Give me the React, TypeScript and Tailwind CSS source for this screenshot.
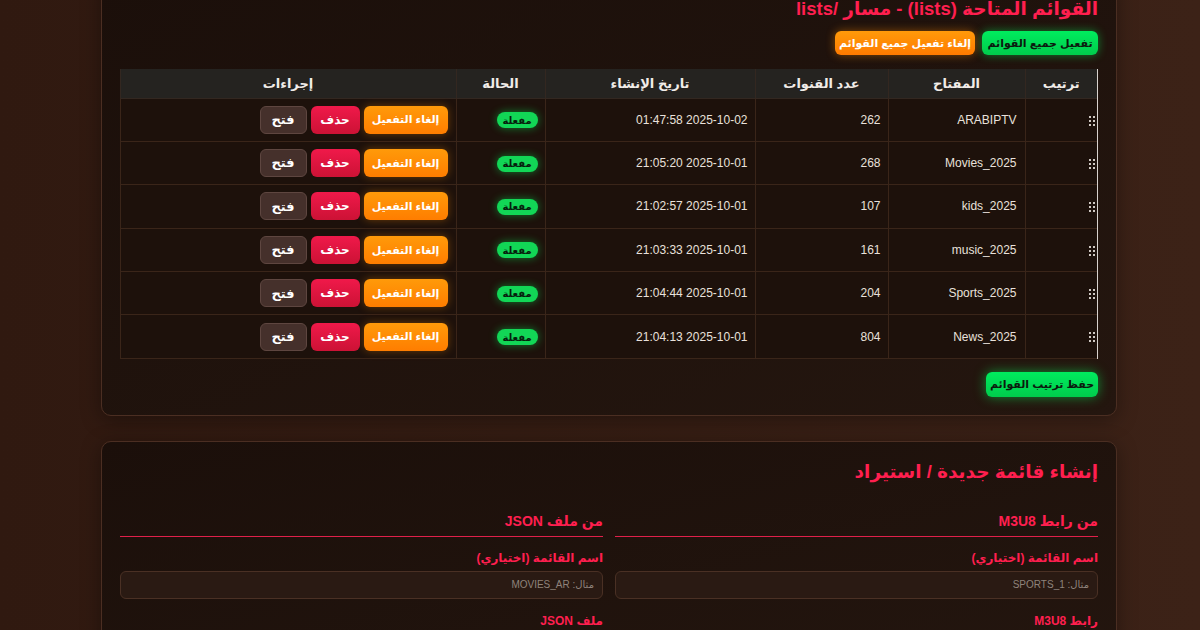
import React from "react";

const rows = [
  { key: "ARABIPTV", count: "262", date: "2025-10-02 01:47:58" },
  { key: "Movies_2025", count: "268", date: "2025-10-01 21:05:20" },
  { key: "kids_2025", count: "107", date: "2025-10-01 21:02:57" },
  { key: "music_2025", count: "161", date: "2025-10-01 21:03:33" },
  { key: "Sports_2025", count: "204", date: "2025-10-01 21:04:44" },
  { key: "News_2025", count: "804", date: "2025-10-01 21:04:13" },
];

function Handle() {
  return (
    <svg width="7" height="10" viewBox="0 0 7 10" className="inline-block">
      {[0, 4].map((x) =>
        [0, 4, 8].map((y) => (
          <rect key={`${x}-${y}`} x={x} y={y} width="2" height="2" fill="#cfc8c2" />
        ))
      )}
    </svg>
  );
}

function Field({ label, placeholder, heading, next }: { label: string; placeholder: string; heading: string; next: string }) {
  return (
    <div className="flex flex-col">
      <h3 className="text-[14px] leading-[20px] font-bold text-[#ff1f4f] pb-[5px] border-b border-[#e0204a]">{heading}</h3>
      <label className="mt-[12px] text-[12px] leading-[18px] font-bold text-[#ff1f4f]">{label}</label>
      <div className="mt-[4px] h-[28px] rounded-[6px] border border-[#4a3024] bg-[#2a1a13] flex items-center px-[8px]">
        <span className="text-[10px] text-[#8f837b]">{placeholder}</span>
      </div>
      <label className="mt-[13px] text-[12px] leading-[18px] font-bold text-[#ff1f4f]">{next}</label>
    </div>
  );
}

export default function App() {
  return (
    <div
      dir="rtl"
      className="w-[1200px] h-[630px] overflow-hidden bg-gradient-to-r from-[#301910] to-[#3c2217]"
      style={{ fontFamily: '"Liberation Sans", "DejaVu Sans", sans-serif' }}
    >
      <div className="mr-[83px] w-[1016px] -mt-[24px] flex flex-col gap-[25px]">
        {/* Card 1 */}
        <div className="rounded-[10px] border border-[#4b2e22] bg-gradient-to-br from-[#1b0f0a] to-[#24160f] pr-[18px] pl-[18px] pt-[18px] pb-[18px] shadow-[0_4px_20px_rgba(0,0,0,0.35)]">
          <h2 className="text-[18.5px] leading-[28px] font-bold text-[#ff1f4f]">القوائم المتاحة (lists) - مسار /lists</h2>
          <div className="mt-[8px] flex gap-[7px]">
            <button className="h-[24px] w-[116px] rounded-[6px] bg-gradient-to-b from-[#00ec5e] to-[#00cc4c] text-[11px] font-bold text-[#0b1a0e] shadow-[0_0_10px_rgba(0,255,90,0.45)]">
              تفعيل جميع القوائم
            </button>
            <button className="h-[24px] w-[140px] rounded-[6px] bg-gradient-to-b from-[#ff9a0a] to-[#ff7a00] text-[11px] font-bold text-white shadow-[0_0_10px_rgba(255,140,0,0.45)]">
              إلغاء تفعيل جميع القوائم
            </button>
          </div>

          <div className="mt-[14px] w-[978px] border-r border-r-[#d8d2ce]">
            <table className="w-[977px] border-collapse table-fixed text-[12px]">
              <colgroup>
                <col className="w-[72px]" />
                <col className="w-[137px]" />
                <col className="w-[133px]" />
                <col className="w-[210px]" />
                <col className="w-[89px]" />
                <col className="w-[336px]" />
              </colgroup>
              <thead>
                <tr className="h-[29px] bg-[#252320]">
                  {["ترتيب", "المفتاح", "عدد القنوات", "تاريخ الإنشاء", "الحالة", "إجراءات"].map((h) => (
                    <th key={h} className="border border-[#332720] border-t-0 border-r-0 text-center font-bold text-[#f1ece8] text-[13px]">
                      {h}
                    </th>
                  ))}
                </tr>
              </thead>
              <tbody>
                {rows.map((r) => (
                  <tr key={r.key} className="h-[43.4px] bg-[#1d110b]">
                    <td className="border border-[#3a2519] border-r-0 text-right pr-[1px] align-middle">
                      <Handle />
                    </td>
                    <td className="border border-[#3a2519] text-right px-[8px] text-[#e9e1db]">{r.key}</td>
                    <td className="border border-[#3a2519] text-right px-[7px] text-[#e9e1db]">{r.count}</td>
                    <td className="border border-[#3a2519] text-right px-[7px] text-[#e9e1db]">{r.date}</td>
                    <td className="border border-[#3a2519] text-right px-[7px]">
                      <span className="inline-flex h-[16px] w-[41px] items-center justify-center rounded-full bg-[#12d656] text-[10px] font-bold text-[#06200d] shadow-[0_0_8px_rgba(0,255,90,0.45)]">
                        مفعلة
                      </span>
                    </td>
                    <td className="border border-[#3a2519] px-[8px]">
                      <div className="flex gap-[4px]">
                        <button className="h-[28px] w-[84px] rounded-[6px] bg-gradient-to-b from-[#ff9a0a] to-[#ff7d00] text-[11px] font-bold text-white shadow-[0_0_8px_rgba(255,140,0,0.35)]">
                          إلغاء التفعيل
                        </button>
                        <button className="h-[28px] w-[49px] rounded-[6px] bg-gradient-to-b from-[#f0194a] to-[#cc1235] text-[12px] font-bold text-white">
                          حذف
                        </button>
                        <button className="h-[28px] w-[47px] rounded-[6px] border border-[#5e4640] bg-[#45302b] text-[13px] font-bold text-white">
                          فتح
                        </button>
                      </div>
                    </td>
                  </tr>
                ))}
              </tbody>
            </table>
          </div>

          <div className="mt-[13px] flex">
            <button className="h-[25px] w-[112px] rounded-[6px] bg-gradient-to-b from-[#00ec5e] to-[#00cc4c] text-[11px] font-bold text-[#0b1a0e] shadow-[0_0_12px_rgba(0,255,90,0.5)]">
              حفظ ترتيب القوائم
            </button>
          </div>
        </div>

        {/* Card 2 */}
        <div className="h-[260px] rounded-[10px] border border-[#4b2e22] bg-gradient-to-br from-[#1b0f0a] to-[#24160f] pr-[18px] pl-[18px] pt-[16px] shadow-[0_4px_20px_rgba(0,0,0,0.35)]">
          <h2 className="text-[18.5px] leading-[28px] font-bold text-[#ff1f4f]">إنشاء قائمة جديدة / استيراد</h2>
          <div className="mt-[25px] grid grid-cols-2 gap-[12px]">
            <Field heading="من رابط M3U8" label="اسم القائمة (اختياري)" placeholder="مثال: SPORTS_1" next="رابط M3U8" />
            <Field heading="من ملف JSON" label="اسم القائمة (اختياري)" placeholder="مثال: MOVIES_AR" next="ملف JSON" />
          </div>
        </div>
      </div>
    </div>
  );
}
